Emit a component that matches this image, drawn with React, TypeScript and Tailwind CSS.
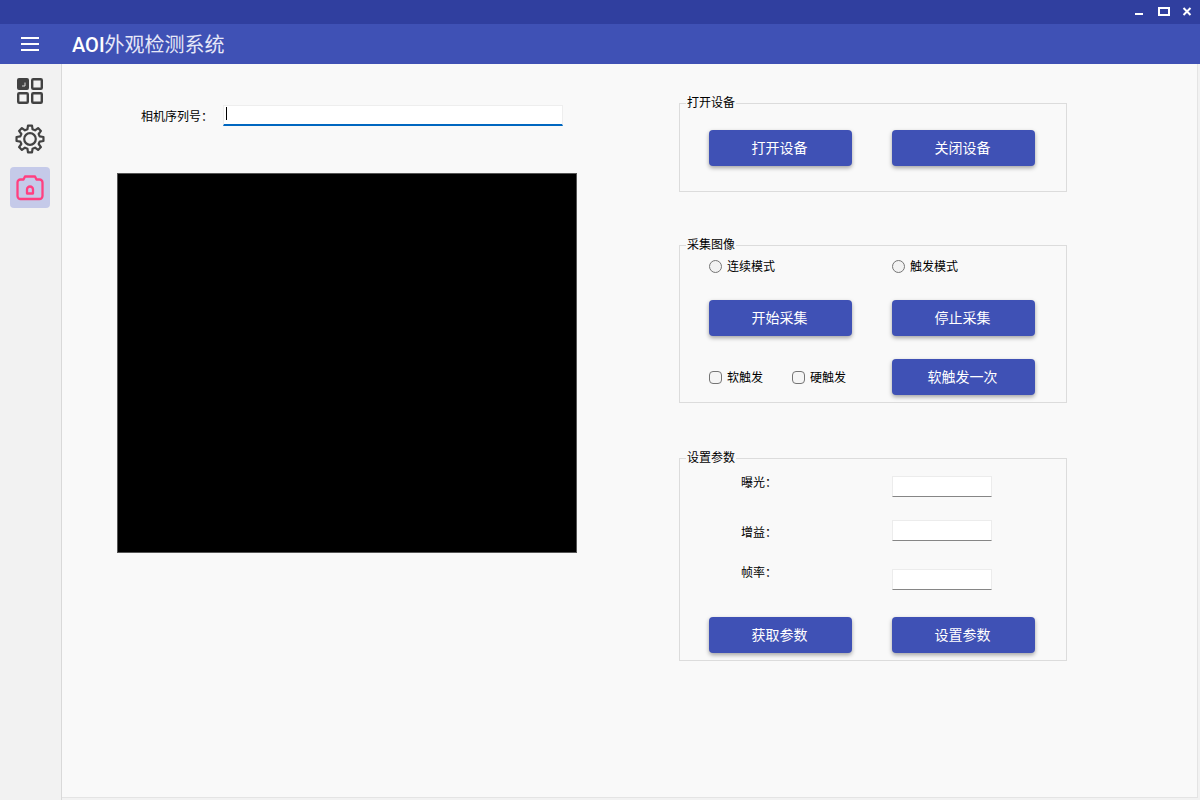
import type { ReactNode } from "react";

const font = { fontFamily: '"Noto Sans CJK SC", sans-serif' };

const gearPath = () => {
  const pts: string[] = [];
  const teeth = 8;
  for (let i = 0; i < teeth; i++) {
    const a = (i / teeth) * Math.PI * 2;
    const step = Math.PI / teeth;
    const corners: [number, number][] = [
      [10, a - step * 0.66],
      [13.6, a - step * 0.38],
      [13.6, a + step * 0.38],
      [10, a + step * 0.66],
    ];
    corners.forEach(([r, t]) => {
      pts.push(`${(15 + r * Math.cos(t)).toFixed(2)} ${(15 + r * Math.sin(t)).toFixed(2)}`);
    });
  }
  return "M" + pts.join("L") + "Z";
};

const Btn = ({ children }: { children: ReactNode }) => (
  <button className="w-[143px] h-9 pr-0.5 pb-0.5 rounded bg-[#3f51b5] text-white text-sm shadow-[0_2px_4px_rgba(0,0,0,0.35)]">
    {children}
  </button>
);

const Group = ({ title, className, children }: { title: string; className: string; children: ReactNode }) => (
  <section className={`relative border border-[#dcdcdc] pl-[29px] ${className}`}>
    <span className="absolute left-[6px] -top-[10px] bg-[#f9f9f9] px-px text-xs leading-4 text-black">{title}</span>
    {children}
  </section>
);

const Radio = ({ label }: { label: string }) => (
  <label className="flex items-center gap-[5px] text-xs leading-4 text-black">
    <span className="w-[13px] h-[13px] rounded-full border border-[#757575] bg-[#f2f2f2]" />
    {label}
  </label>
);

const Check = ({ label }: { label: string }) => (
  <label className="flex items-center gap-[5px] text-xs leading-4 text-black">
    <span className="w-[13px] h-[13px] rounded-sm border border-[#757575] bg-[#f5f5f5]" />
    {label}
  </label>
);

const ParamInput = () => (
  <input className="w-[100px] h-[21px] bg-white border border-[#ececec] border-b-[#868686] outline-none" />
);

export default function App() {
  return (
    <div className="w-[1200px] h-[800px] overflow-hidden flex flex-col bg-[#f2f2f2]" style={font}>
      {/* title bar */}
      <div className="h-6 bg-[#303f9f] flex items-start justify-end shrink-0">
        <svg width="70" height="24" viewBox="0 0 70 24" fill="none" stroke="white" strokeWidth="2">
          <path d="M5 14h8" />
          <rect x="29" y="8" width="10" height="7" />
          <path d="M53.5 8l7 7M60.5 8l-7 7" />
        </svg>
      </div>

      {/* header */}
      <header className="h-10 bg-[#3f51b5] flex items-center shrink-0">
        <svg className="ml-[21px]" width="18" height="14" viewBox="0 0 18 14" fill="none" stroke="white" strokeWidth="2">
          <path d="M0 1h18M0 7h18M0 13h18" />
        </svg>
        <h1 className="ml-[33px] text-xl leading-none text-[#e6e8f8]">
          <span className="font-medium text-white" style={{ fontFamily: "Roboto, sans-serif" }}>AOI</span>外观检测系统
        </h1>
      </header>

      <div className="flex flex-1 min-h-0">
        {/* side menu */}
        <nav className="w-[62px] shrink-0 border-r border-[#d9d9d9] flex flex-col items-start pl-[10px]">
          <div className="w-10 h-10 mt-[7px] flex items-center justify-center">
            <svg width="26" height="26" viewBox="0 0 26 26" fill="none" stroke="#424242" strokeWidth="2.4">
              <rect x="1.2" y="1.2" width="9.6" height="9.6" rx="0.8" fill="#424242" />
              <path d="M8 4.500v3.500h-3" stroke="#d8d8d8" strokeWidth="1" />
              <rect x="15.200" y="1.200" width="9.600" height="9.600" rx="1" />
              <rect x="1.200" y="15.200" width="9.600" height="9.600" rx="1" />
              <rect x="15.200" y="15.200" width="9.600" height="9.600" rx="1" />
            </svg>
          </div>
          <div className="w-10 h-10 mt-[8px] flex items-center justify-center">
            <svg width="30" height="30" viewBox="0 0 30 30" fill="none" stroke="#424242" strokeWidth="2.2" strokeLinejoin="round">
              <path d={gearPath()} />
              <circle cx="15" cy="15" r="5.800" />
            </svg>
          </div>
          <div className="w-10 h-[41px] mt-2 rounded bg-[#c5cae9] flex items-center justify-center">
            <svg width="30" height="26" viewBox="0 0 30 26" fill="none" stroke="#ff4081" strokeWidth="2.3">
              <path d="M8.500 4.500l1.500-3h10l1.500 3h3a3 3 0 0 1 3 3v13.500a3 3 0 0 1-3 3H5.500a3 3 0 0 1-3-3V7.500a3 3 0 0 1 3-3z" strokeLinejoin="round" />
              <path d="M12 18.500v-4a3 3 0 0 1 6 0v4z" strokeLinejoin="round" />
            </svg>
          </div>
        </nav>

        {/* content */}
        <main className="flex-1 mb-[2px] mr-[2px] bg-[#f9f9f9] border-r border-b border-[#e4e4e4] flex pl-[55px]">
          <div className="w-[460px] shrink-0 pt-[41px]">
            <div className="flex items-center pl-[24px]">
              <label className="w-[82px] text-xs text-black">相机序列号：</label>
              <div className="relative w-[340px] h-[21px]">
                <input className="block w-full h-full bg-white border border-[#eeeeee] border-b-2 border-b-[#0067c0] outline-none" />
                <span className="absolute left-[3px] top-[2px] w-px h-[13px] bg-black" />
              </div>
            </div>
            <div className="mt-[47px] w-[460px] h-[380px] bg-black border border-[#555555]" />
          </div>

          <div className="ml-[102px] w-[388px] shrink-0 pt-[39px]">
            <Group title="打开设备" className="h-[89px] pt-[26px]">
              <div className="flex gap-10">
                <Btn>打开设备</Btn>
                <Btn>关闭设备</Btn>
              </div>
            </Group>

            <Group title="采集图像" className="h-[158px] mt-[53px] pt-3">
              <div className="flex">
                <div className="w-[183px]"><Radio label="连续模式" /></div>
                <Radio label="触发模式" />
              </div>
              <div className="flex gap-10 mt-[26px]">
                <Btn>开始采集</Btn>
                <Btn>停止采集</Btn>
              </div>
              <div className="flex items-center mt-[23px]">
                <div className="w-[183px] flex gap-[29px]">
                  <Check label="软触发" />
                  <Check label="硬触发" />
                </div>
                <Btn>软触发一次</Btn>
              </div>
            </Group>

            <Group title="设置参数" className="h-[203px] mt-[55px] pt-[17px]">
              <div className="flex items-start">
                <label className="w-[183px] pl-[32px] -mt-[2px] text-xs leading-4 text-black">曝光：</label>
                <ParamInput />
              </div>
              <div className="flex items-start mt-[23px]">
                <label className="w-[183px] pl-[32px] mt-1 text-xs leading-4 text-black">增益：</label>
                <ParamInput />
              </div>
              <div className="flex items-start mt-[28px]">
                <label className="w-[183px] pl-[32px] -mt-[5px] text-xs leading-4 text-black">帧率：</label>
                <ParamInput />
              </div>
              <div className="flex gap-10 mt-[27px]">
                <Btn>获取参数</Btn>
                <Btn>设置参数</Btn>
              </div>
            </Group>
          </div>
        </main>
      </div>
    </div>
  );
}
